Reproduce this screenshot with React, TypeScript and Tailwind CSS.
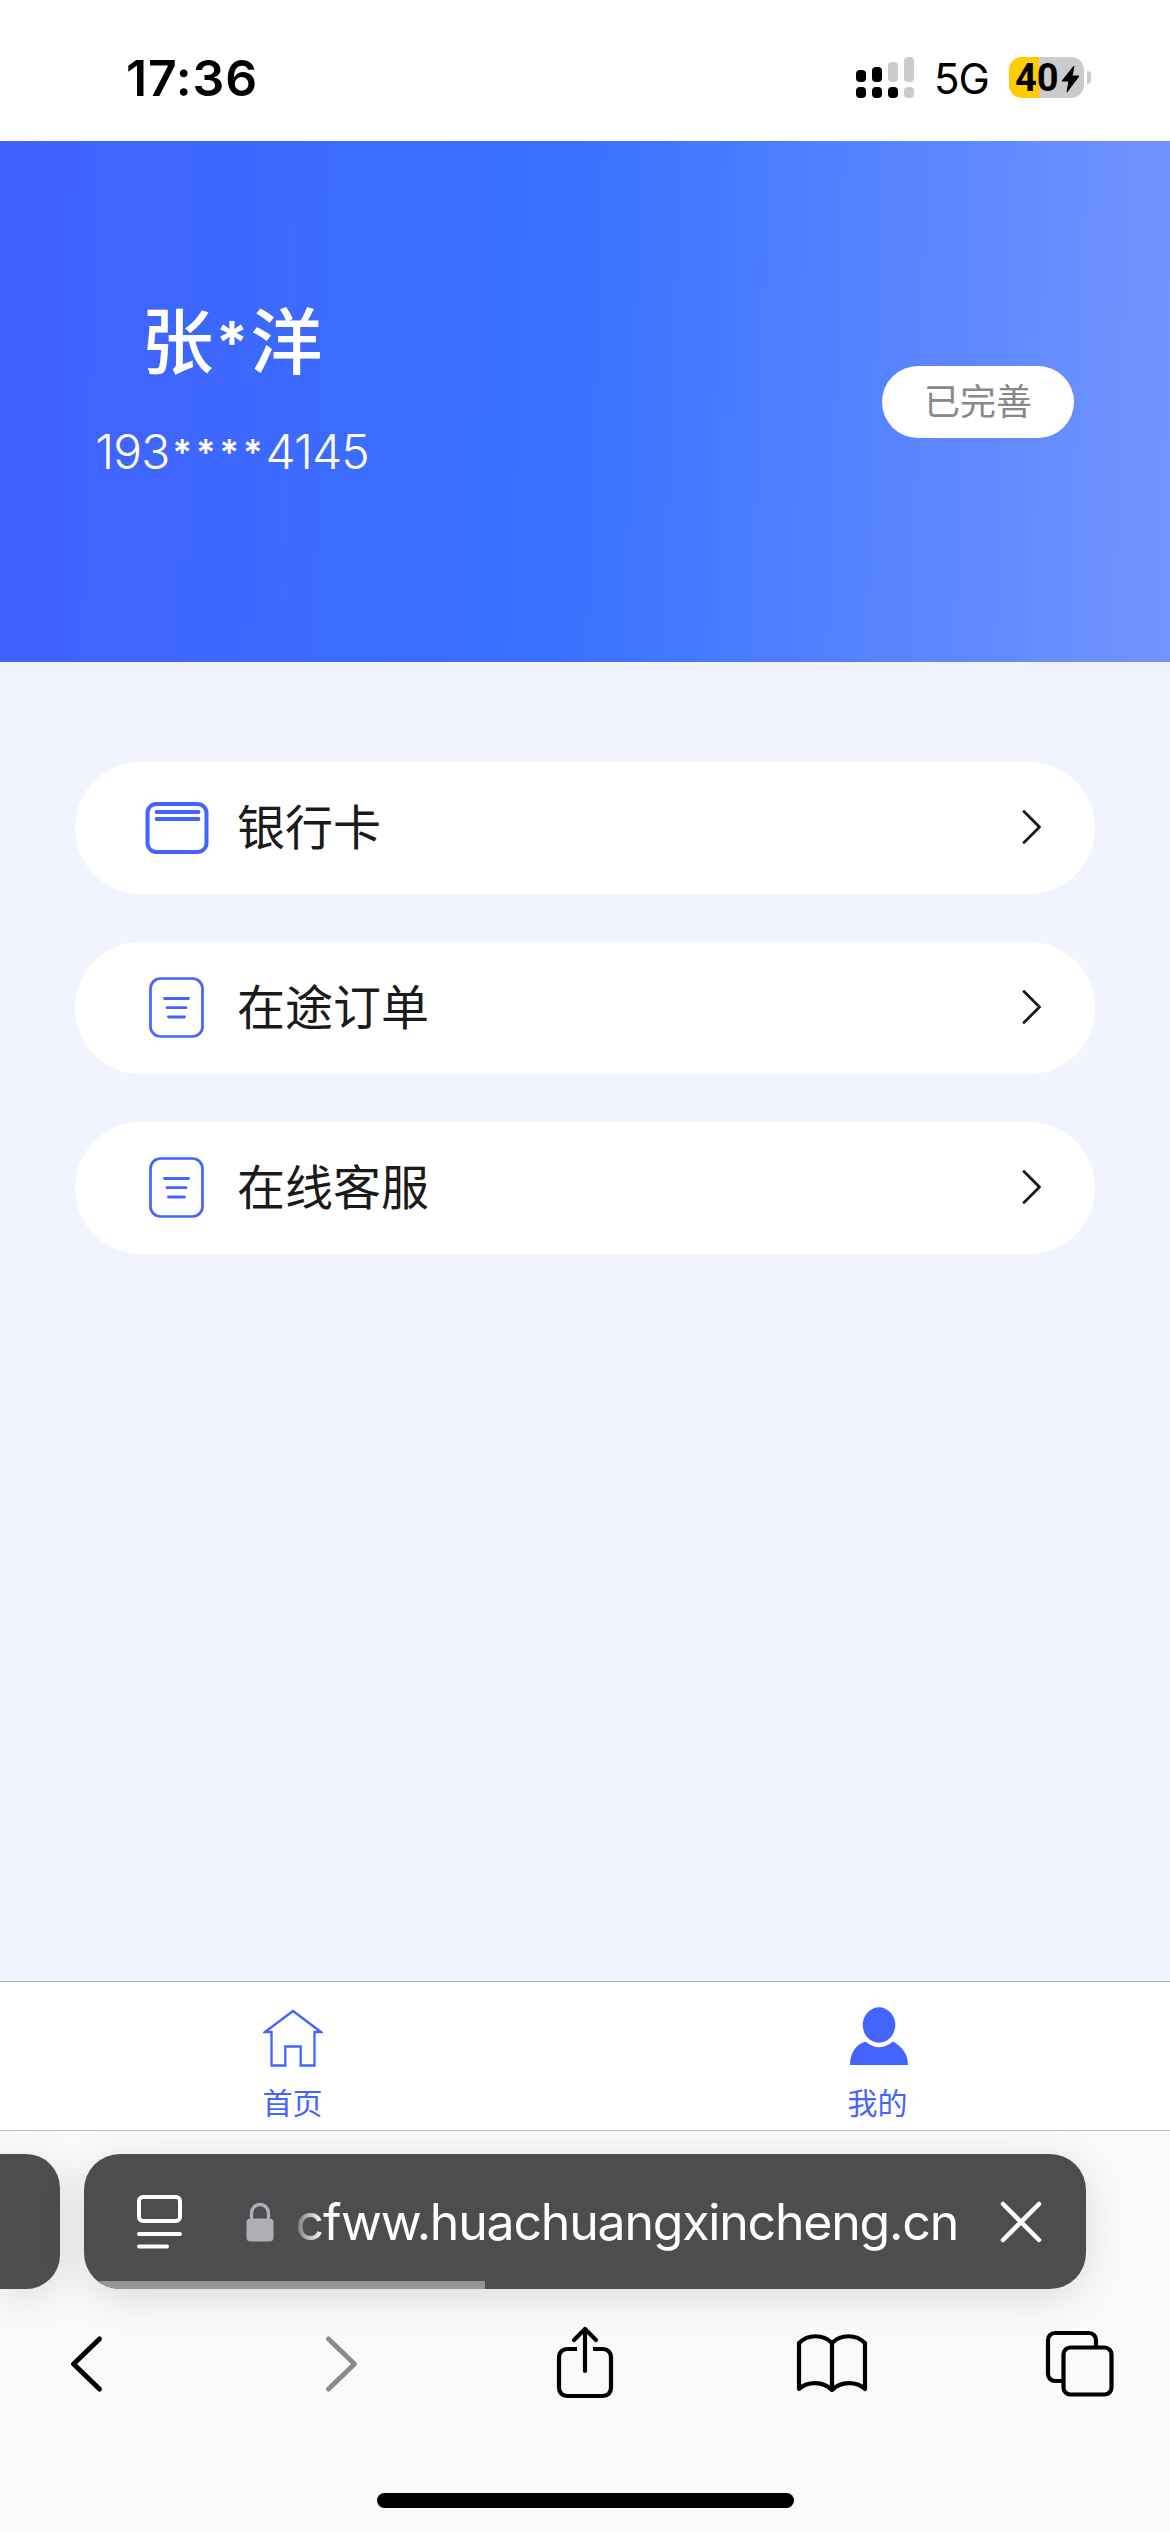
import type { ReactNode } from 'react';

const bars = [
  { height: 'h-[12px]', top: 'bg-black', dot: 'bg-black' },
  { height: 'h-[15px]', top: 'bg-black', dot: 'bg-black' },
  { height: 'h-[20px]', top: 'bg-[#cbcbcb]', dot: 'bg-black' },
  { height: 'h-[25px]', top: 'bg-[#cbcbcb]', dot: 'bg-[#cbcbcb]' },
];

function StatusBar() {
  return (
    <div className="h-[141px] bg-white flex justify-between pl-[126px] pr-[79px]">
      <span className="mt-[47px] text-[50px] leading-[62px] h-[62px] font-semibold text-black tracking-[0.8px]">17:36</span>
      <div className="flex mt-[57px] h-[41px]">
        <div className="flex items-end gap-[6px]">
          {bars.map((bar, i) => (
            <div key={i} className="flex flex-col gap-[5px] w-[10px]">
              <div className={`${bar.height} ${bar.top} rounded-[4px]`} />
              <div className={`h-[11px] ${bar.dot} rounded-[4px]`} />
            </div>
          ))}
        </div>
        <span className="ml-[20px] w-[57px] text-[42px] leading-[44px] text-black tracking-[-1px]">5G</span>
        <div className="relative ml-[18px] w-[75px] h-[41px] rounded-[13px] bg-[linear-gradient(to_right,#ffcc00_30px,#cbcbcb_30px)] flex items-center">
          <span className="ml-[6px] mt-[2px] font-[Roboto] font-bold text-[38px] leading-[45px] text-black">40</span>
          <svg className="absolute left-[52px] top-[8px]" width="19" height="28" viewBox="0 0 19 28">
            <path d="M13 1 1 16h7L6 27 18 11h-7l2-10z" fill="#000" stroke="#000" strokeWidth="1" strokeLinejoin="round" />
          </svg>
        </div>
        <div className="ml-[3px] mt-[14px] w-[4px] h-[13px] bg-[#cbcbcb] rounded-r-full" />
      </div>
    </div>
  );
}

function ProfileHeader() {
  return (
    <header className="h-[521px] bg-[linear-gradient(92deg,#4161ff_0%,#3871ff_48%,#7394ff_100%)] flex justify-between pl-[95px] pr-[96px]">
      <div className="w-[274px] pt-[153px] flex flex-col items-center text-white">
        <h1 className="flex items-center h-[96px] text-[72px] leading-[96px] font-medium">
          <span>张</span>
          <span className="w-[37px] text-center text-[58px] font-bold h-[84px] leading-[84px]">*</span>
          <span>洋</span>
        </h1>
        <p className="flex mt-[32px] h-[60px] text-[48px] leading-[60px] font-light whitespace-nowrap">
          <span className="tracking-[-0.9px]">193</span>
          <span className="flex px-[1px]">
            {[0, 1, 2, 3].map((i) => (
              <span key={i} className="w-[23.5px] text-center text-[36px] leading-[60px] font-semibold">*</span>
            ))}
          </span>
          <span className="tracking-[-0.9px]">4145</span>
        </p>
      </div>
      <button className="mt-[225px] w-[192px] h-[72px] rounded-full bg-white text-[36px] leading-[70px] text-[#888888]">
        已完善
      </button>
    </header>
  );
}

function CardIcon() {
  return (
    <svg width="64" height="64" viewBox="0 0 64 64" fill="none" stroke="#4464ff" strokeLinecap="round">
      <rect x="2.5" y="8" width="59" height="48" rx="9" strokeWidth="4" />
      <path d="M11.5 16h42M11.5 23h42" strokeWidth="3.8" />
    </svg>
  );
}

function OrderIcon() {
  return (
    <svg width="64" height="64" viewBox="0 0 64 64" fill="none" stroke="#4464ff" strokeLinecap="round">
      <rect x="5.5" y="2.5" width="52" height="58" rx="10" strokeWidth="2.7" />
      <path d="M19.5 22.5h24M22 31.7h19M23.5 41h16" strokeWidth="2.8" />
    </svg>
  );
}

function MenuItem({ icon, label }: { icon: ReactNode; label: string }) {
  return (
    <div className="h-[132px] rounded-full bg-white flex items-center pl-[70px] pr-[53px]">
      {icon}
      <span className="ml-[28px] flex-1 text-[48px] leading-[60px] text-[#1a1a1a]">{label}</span>
      <svg width="20" height="34" viewBox="0 0 20 34" fill="none" className="-mt-[2px]">
        <path d="M2 1.5 17.5 17 2 32.5" stroke="#1a1a1a" strokeWidth="2.8" strokeLinecap="round" strokeLinejoin="round" />
      </svg>
    </div>
  );
}

function TabBar() {
  return (
    <nav className="h-[150px] bg-white border-t border-t-[#a8a8a8] border-b border-b-[#c0c0c2] grid grid-cols-2 text-[30px] leading-[40px] text-[#4464ff]">
      <div className="flex flex-col items-center pt-[25px]">
        <svg width="60" height="60" viewBox="0 0 60 60" fill="none" stroke="#4464ff" strokeWidth="2.3">
          <path d="M30 4 58 25h-6.500V58.500H37.700V39.500H22.300V58.500H8.500V25H2z" />
        </svg>
        <span className="mt-[16px]">首页</span>
      </div>
      <div className="flex flex-col items-center pt-[25px]">
        <svg width="60" height="60" viewBox="0 0 60 60" fill="#4464ff">
          <ellipse cx="31" cy="18" rx="16.3" ry="17.7" />
          <path d="M2 58C2 45 9 37 17.5 34.5Q31 46 45 34.5C53 39 60 46 60 58z" />
        </svg>
        <span className="mt-[16px]">我的</span>
      </div>
    </nav>
  );
}

function AddressBar() {
  return (
    <div className="flex gap-[24px] pt-[23px]">
      <div className="w-[60px] h-[135px] rounded-r-[34px] bg-[#4d4d4f] shadow-[0_8px_44px_rgba(0,0,0,0.13)]" />
      <div className="relative w-[1002px] h-[135px] rounded-[36px] overflow-hidden bg-[#4d4d4f] shadow-[0_8px_44px_rgba(0,0,0,0.13)] flex items-center pl-[53px]">
        <svg width="46" height="56" viewBox="0 0 46 56" fill="none" stroke="#fff" strokeWidth="4" strokeLinecap="round">
          <rect x="2" y="3" width="41" height="24" rx="4" />
          <path d="M2 40h41M2 52.5h28" />
        </svg>
        <svg width="28" height="40" viewBox="0 0 28 40" className="ml-[63px]">
          <path d="M5.5 18v-7a8.5 8.5 0 0 1 17 0v7" fill="none" stroke="#aeaeb4" strokeWidth="3.4" />
          <rect x="0.5" y="16.5" width="27" height="23" rx="4" fill="#aeaeb4" />
        </svg>
        <div className="ml-[14px] w-[670px] h-[70px] flex justify-end text-white text-[50px] leading-[70px] tracking-[-1.2px] whitespace-nowrap [mask-image:linear-gradient(to_right,transparent,#000_34px)]">
          <span>cfww.huachuangxincheng.cn</span>
        </div>
        <svg width="42" height="42" viewBox="0 0 42 42" className="ml-[42px]" stroke="#fff" strokeWidth="4.5" strokeLinecap="round">
          <path d="M3 3l36 36M39 3L3 39" />
        </svg>
        {/* Page load progress */}
        <div className="absolute left-0 bottom-0 w-[401px] h-[8px] bg-[#959597]" />
      </div>
    </div>
  );
}

function Toolbar() {
  return (
    <div className="mt-[34px] h-[80px] flex items-center justify-between pl-[50px] pr-[54px]">
      <svg width="74" height="80" viewBox="0 0 74 80" fill="none" stroke="#000" strokeWidth="5" strokeLinecap="round" strokeLinejoin="round">
        <path d="M49.5 16 23.5 41l26 25" />
      </svg>
      <svg width="74" height="80" viewBox="0 0 74 80" fill="none" stroke="#8a8a8c" strokeWidth="5" strokeLinecap="round" strokeLinejoin="round">
        <path d="M30.5 16l26 25-26 25" />
      </svg>
      <svg width="74" height="80" viewBox="-9 0 74 80" fill="none" stroke="#000" strokeWidth="4.2" strokeLinecap="round" strokeLinejoin="round">
        <path d="M22 26H12a8 8 0 0 0-8 8v31a8 8 0 0 0 8 8h36a8 8 0 0 0 8-8V34a8 8 0 0 0-8-8H38" strokeLinecap="butt" />
        <path d="M30 6v42M19 17 30 6l11 11" />
      </svg>
      <svg width="74" height="80" viewBox="-1 0 74 80" fill="none" stroke="#000" strokeWidth="4.2" strokeLinecap="round" strokeLinejoin="round">
        <path d="M37 20C28 11 13 11 4 20v46c9-8 24-8 33 1 9-9 24-9 33-1V20c-9-9-24-9-33 0zM37 20v47" />
      </svg>
      <svg width="74" height="80" viewBox="-4 0 74 80" fill="none" stroke="#000" strokeWidth="4.2">
        <path d="M17 58H9a7 7 0 0 1-7-7V17a7 7 0 0 1 7-7h34a7 7 0 0 1 7 7v7" />
        <rect x="17.5" y="24.5" width="48" height="47" rx="7" />
      </svg>
    </div>
  );
}

export default function App() {
  return (
    <div className="w-[1170px] h-[2532px] overflow-hidden flex flex-col bg-[#f1f4ff] font-[Inter,'Noto_Sans_CJK_SC',sans-serif]">
      <StatusBar />
      <ProfileHeader />

      <main className="flex-1 flex flex-col gap-[48px] px-[75px] pt-[100px]">
        <MenuItem icon={<CardIcon />} label="银行卡" />
        <MenuItem icon={<OrderIcon />} label="在途订单" />
        <MenuItem icon={<OrderIcon />} label="在线客服" />
      </main>

      <TabBar />

      {/* Browser chrome */}
      <footer className="h-[401px] bg-[#fafafc] overflow-hidden">
        <AddressBar />
        <Toolbar />
        <div className="mx-auto mt-[90px] w-[417px] h-[15px] rounded-full bg-black" />
      </footer>
    </div>
  );
}
